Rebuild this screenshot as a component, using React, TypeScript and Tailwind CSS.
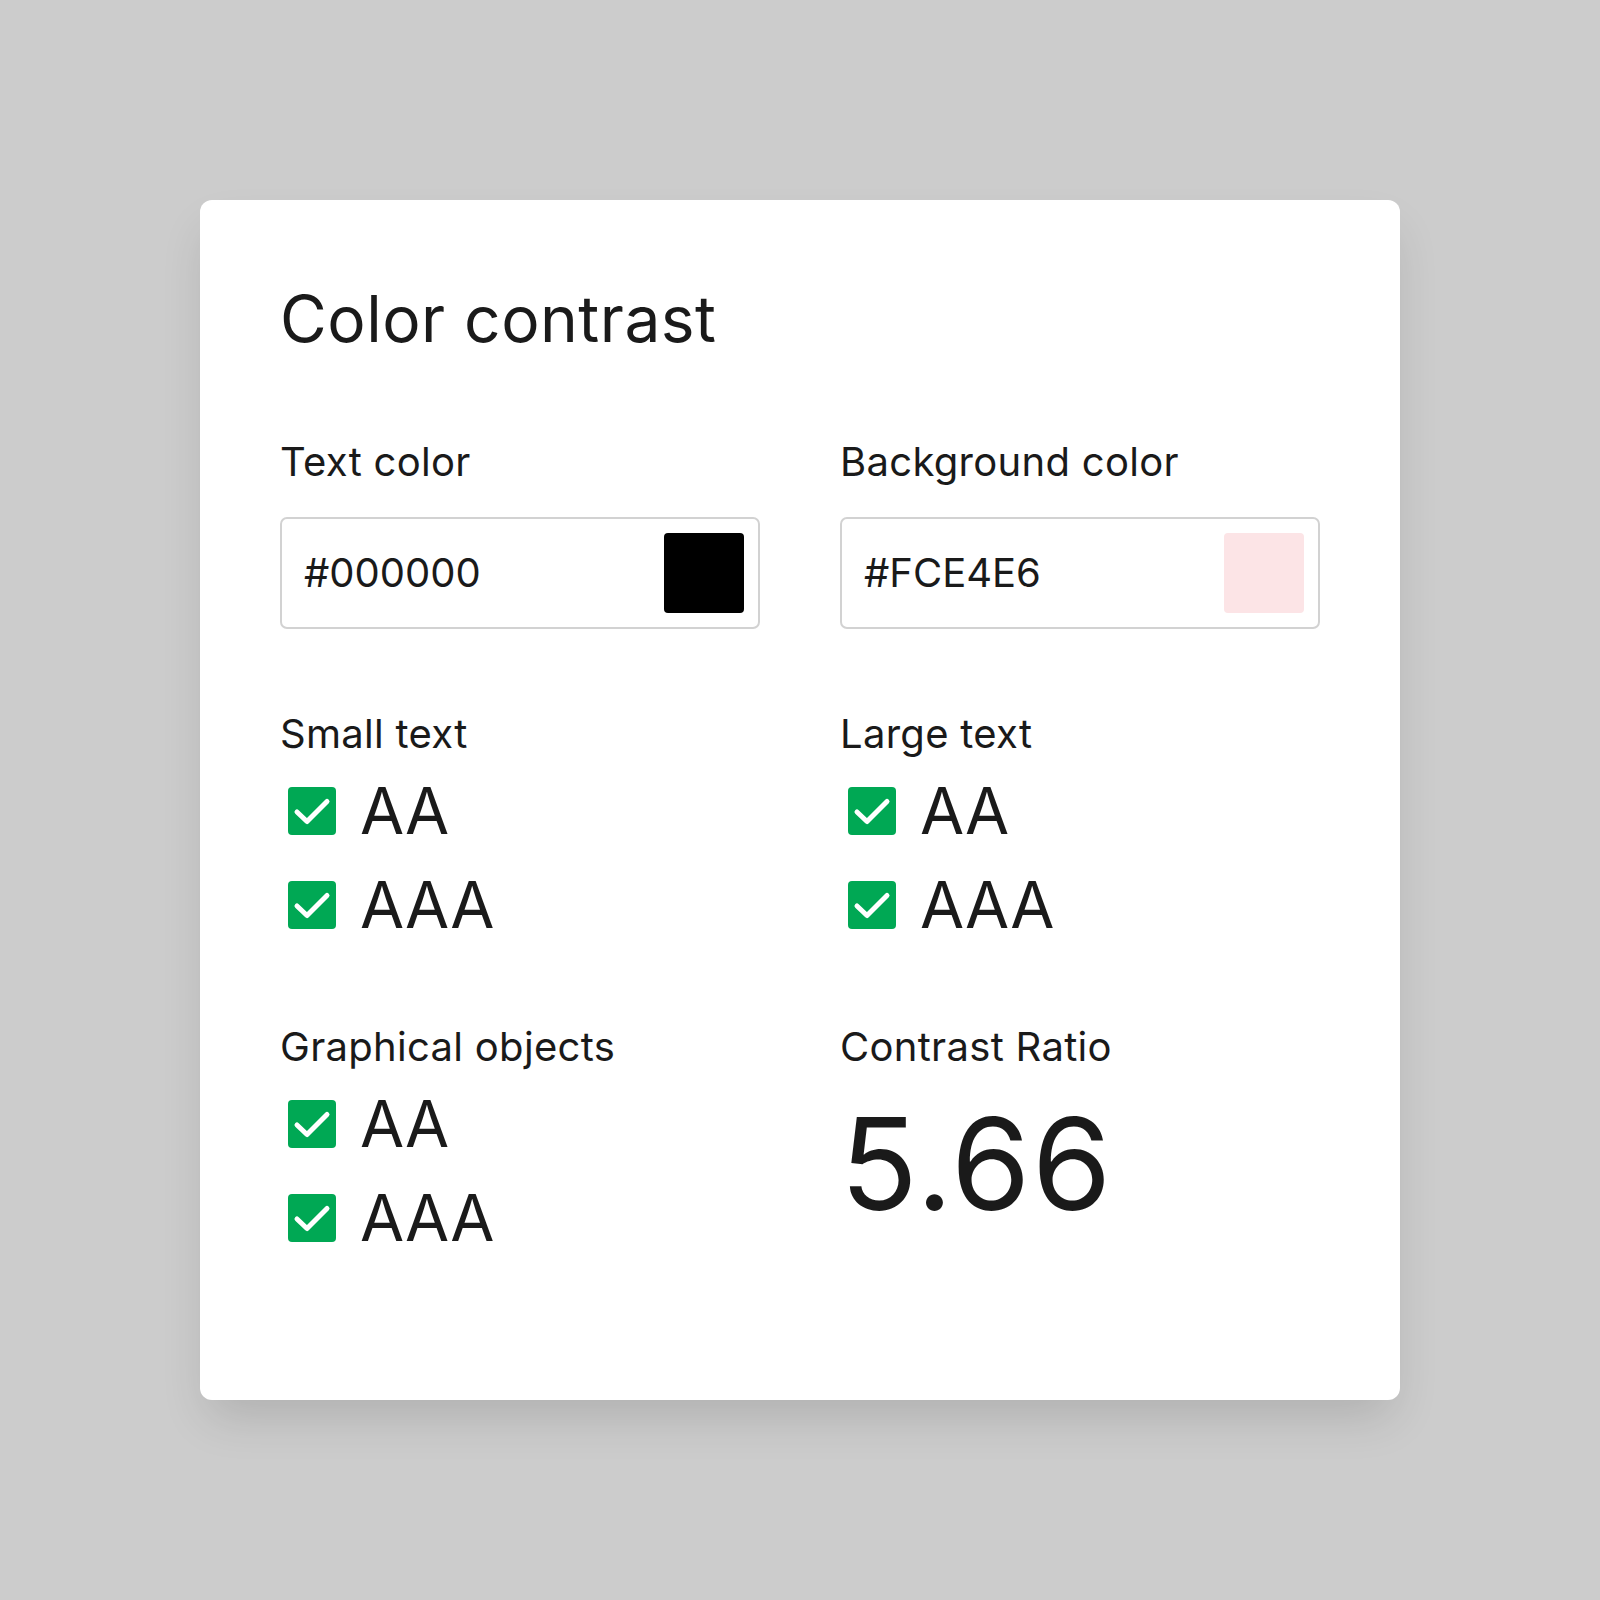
import React from "react";

function Check() {
  return (
    <svg width="64" height="64" viewBox="0 0 64 64" className="shrink-0">
      <rect x="8" y="8" width="48" height="48" rx="4" fill="#00a854" />
      <polyline
        points="17,33 27,42.5 47,22.5"
        fill="none"
        stroke="#ffffff"
        strokeWidth="5"
        strokeLinecap="round"
        strokeLinejoin="round"
      />
    </svg>
  );
}

function CheckRow({ label }: { label: string }) {
  return (
    <div className="flex items-center gap-4 h-16">
      <Check />
      <span className="text-[64px] leading-[64px]">{label}</span>
    </div>
  );
}

function Label({ children }: { children: React.ReactNode }) {
  return <div className="text-[40px] leading-[46px] tracking-[0.3px]">{children}</div>;
}

function ColorInput({ value, swatch }: { value: string; swatch: string }) {
  return (
    <div className="mt-[32px] h-[112px] rounded-[7px] border-2 border-[#d2d2d2] flex items-center justify-between pl-[22px] pr-[14px]">
      <span className="text-[40px] leading-[48px]">{value}</span>
      <div className={`w-20 h-20 rounded-[4px] ${swatch}`} />
    </div>
  );
}

function Checks({ title }: { title: string }) {
  return (
    <div>
      <Label>{title}</Label>
      <div className="mt-[22px] flex flex-col gap-[30px]">
        <CheckRow label="AA" />
        <CheckRow label="AAA" />
      </div>
    </div>
  );
}

export default function App() {
  return (
    <div
      className="min-h-[1600px] w-full bg-[#cccccc] flex items-center justify-center text-[#1a1a1a]"
      style={{ fontFamily: "Inter, 'Noto Sans', sans-serif" }}
    >
      <div className="w-[1200px] h-[1200px] bg-white rounded-[12px] shadow-[0_24px_48px_-8px_rgba(0,0,0,0.14)] px-20 pt-20">
        <h1 className="text-[64px] leading-[77px] font-normal tracking-[0.5px]">Color contrast</h1>
        <div className="mt-[82px] grid grid-cols-2 gap-x-20">
          <div>
            <Label>Text color</Label>
            <ColorInput value="#000000" swatch="bg-black" />
          </div>
          <div>
            <Label>Background color</Label>
            <ColorInput value="#FCE4E6" swatch="bg-[#fce4e6]" />
          </div>
        </div>
        <div className="mt-[82px] grid grid-cols-2 gap-x-20">
          <Checks title="Small text" />
          <Checks title="Large text" />
        </div>
        <div className="mt-[87px] grid grid-cols-2 gap-x-20">
          <Checks title="Graphical objects" />
          <div>
            <Label>Contrast Ratio</Label>
            <div className="mt-[30px] text-[128px] leading-[128px] tracking-[1.5px]">5.66</div>
          </div>
        </div>
      </div>
    </div>
  );
}
